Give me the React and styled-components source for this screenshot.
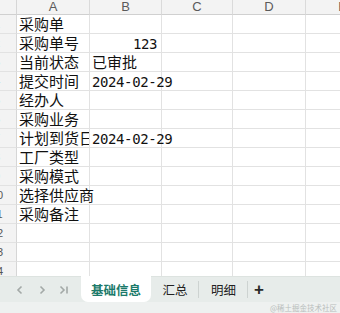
import React from 'react';
import styled, {createGlobalStyle} from 'styled-components';

const GlobalStyle = createGlobalStyle`
    html, body {
        margin: 0;
        padding: 0;
        background: #ffffff;
        overflow: hidden;
    }
`;

const Page = styled.div`
    width: 340px;
    height: 313px;
    display: flex;
    flex-direction: column;
    font-family: "Noto Sans CJK SC", "Liberation Sans", sans-serif;
    overflow: hidden;
`;

const Sheet = styled.div`
    height: 276px;
    width: 340px;
    overflow: hidden;
    display: grid;
    grid-template-columns: 17px 73px 72px 71px 73px 74px;
    grid-auto-rows: 19px;
    grid-template-rows: 15px;
`;

const Corner = styled.div`
    background: #f3f3f3;
    border-right: 1px solid #d6d6d6;
    border-bottom: 1px solid #d0d0d0;
    box-sizing: border-box;
`;

const ColHead = styled.div`
    background: #f3f3f3;
    border-right: 1px solid #dadada;
    border-bottom: 1px solid #d0d0d0;
    box-sizing: border-box;
    color: #5a5a5a;
    font-family: "Liberation Sans", sans-serif;
    font-size: 13px;
    line-height: 14px;
    text-align: center;
    overflow: hidden;
`;

const RowHead = styled.div`
    background: #f3f3f3;
    border-right: 1px solid #d6d6d6;
    border-bottom: 1px solid #e2e2e2;
    box-sizing: border-box;
    overflow: hidden;
    display: flex;
    justify-content: flex-end;
`;

const RowNum = styled.span`
    flex: none;
    width: 40px;
    margin-right: -1px;
    text-align: center;
    color: #555555;
    font-family: "Liberation Sans", sans-serif;
    font-size: 11px;
    line-height: 18px;
`;

const Cell = styled.div`
    border-right: 1px solid #e2e2e2;
    border-bottom: 1px solid #e2e2e2;
    box-sizing: border-box;
    padding: 0 ${p => (p.$num ? '4px' : '2px')} 0 2px;
    font-size: 15px;
    line-height: 18px;
    color: #111111;
    white-space: nowrap;
    text-align: ${p => (p.$num ? 'right' : 'left')};
    overflow: ${p => (p.$clip ? 'hidden' : 'visible')};
    position: relative;
    z-index: ${p => (p.$clip ? 0 : 1)};
`;

const Digits = styled.span`
    font-family: "DejaVu Sans Mono", "Liberation Mono", monospace;
    font-size: 14px;
    letter-spacing: -0.4px;
`;

const TabBar = styled.div`
    height: 26px;
    background: #e7ecea;
    display: flex;
    align-items: stretch;
    border-top: 1px solid #dde3e0;
    box-sizing: border-box;
`;

const Nav = styled.div`
    width: 81px;
    display: flex;
    align-items: center;
    padding-left: 14px;
    gap: 10px;
    box-sizing: border-box;
`;

const NavBtn = styled.svg`
    width: 12px;
    height: 12px;
    stroke: #a3a9a7;
    stroke-width: 1.6;
    fill: none;
`;

const Tab = styled.div`
    width: ${p => p.$w}px;
    display: flex;
    align-items: center;
    justify-content: center;
    font-size: 12.5px;
    color: ${p => (p.$active ? '#1b7a6a' : '#222222')};
    font-weight: ${p => (p.$active ? 700 : 400)};
    background: ${p => (p.$active ? '#ffffff' : 'transparent')};
    border-radius: ${p => (p.$active ? '0 0 7px 7px' : '0')};
    margin-top: ${p => (p.$active ? '-1px' : '0')};
    position: relative;

    &::after {
        content: '';
        display: ${p => (p.$sep ? 'block' : 'none')};
        position: absolute;
        right: 0;
        top: 4px;
        bottom: 4px;
        width: 1px;
        background: #cdd3d1;
    }
`;

const Plus = styled.div`
    width: 22px;
    display: flex;
    align-items: center;
    justify-content: center;
    font-family: "Liberation Sans", sans-serif;
    font-size: 17px;
    font-weight: 700;
    color: #2a2a2a;
`;

const Footer = styled.div`
    flex: 1;
    background: #eef1f0;
    display: flex;
    justify-content: flex-end;
    align-items: center;
    padding-right: 3px;
    font-size: 7.5px;
    color: #b9bebc;
    line-height: 1;
`;

const rows = [
    ['采购单', '', false],
    ['采购单号', '123', true],
    ['当前状态', '已审批', false],
    ['提交时间', '2024-02-29', false],
    ['经办人', '', false],
    ['采购业务', '', false],
    ['计划到货日期', '2024-02-29', false],
    ['工厂类型', '', false],
    ['采购模式', '', false],
    ['选择供应商', '', false],
    ['采购备注', '', false],
    ['', '', false],
    ['', '', false],
    ['', '', false],
];

const isDate = v => /^\d{4}-/.test(v);

export default function App() {
    return (
        <Page>
            <GlobalStyle/>
            <Sheet>
                <Corner/>
                {['A', 'B', 'C', 'D', 'E'].map(c => (
                    <ColHead key={c}>{c}</ColHead>
                ))}
                {rows.map(([a, b, num], i) => (
                    <React.Fragment key={i}>
                        <RowHead><RowNum>{i + 1}</RowNum></RowHead>
                        <Cell $clip={b !== ''}>{a}</Cell>
                        <Cell $num={num}>
                            {isDate(b) || num ? <Digits>{b}</Digits> : b}
                        </Cell>
                        <Cell $clip/>
                        <Cell $clip/>
                        <Cell $clip/>
                    </React.Fragment>
                ))}
            </Sheet>
            <TabBar>
                <Nav>
                    <NavBtn viewBox="0 0 12 12"><path d="M7.5 2.5 L4 6 L7.5 9.5"/></NavBtn>
                    <NavBtn viewBox="0 0 12 12"><path d="M4.5 2.5 L8 6 L4.5 9.5"/></NavBtn>
                    <NavBtn viewBox="0 0 12 12"><path d="M2.5 2.5 L6 6 L2.5 9.5 M9 2.5 V9.5"/></NavBtn>
                </Nav>
                <Tab $w={70} $active>基础信息</Tab>
                <Tab $w={48} $sep>汇总</Tab>
                <Tab $w={49} $sep>明细</Tab>
                <Plus>+</Plus>
            </TabBar>
            <Footer>@稀土掘金技术社区</Footer>
        </Page>
    );
}
